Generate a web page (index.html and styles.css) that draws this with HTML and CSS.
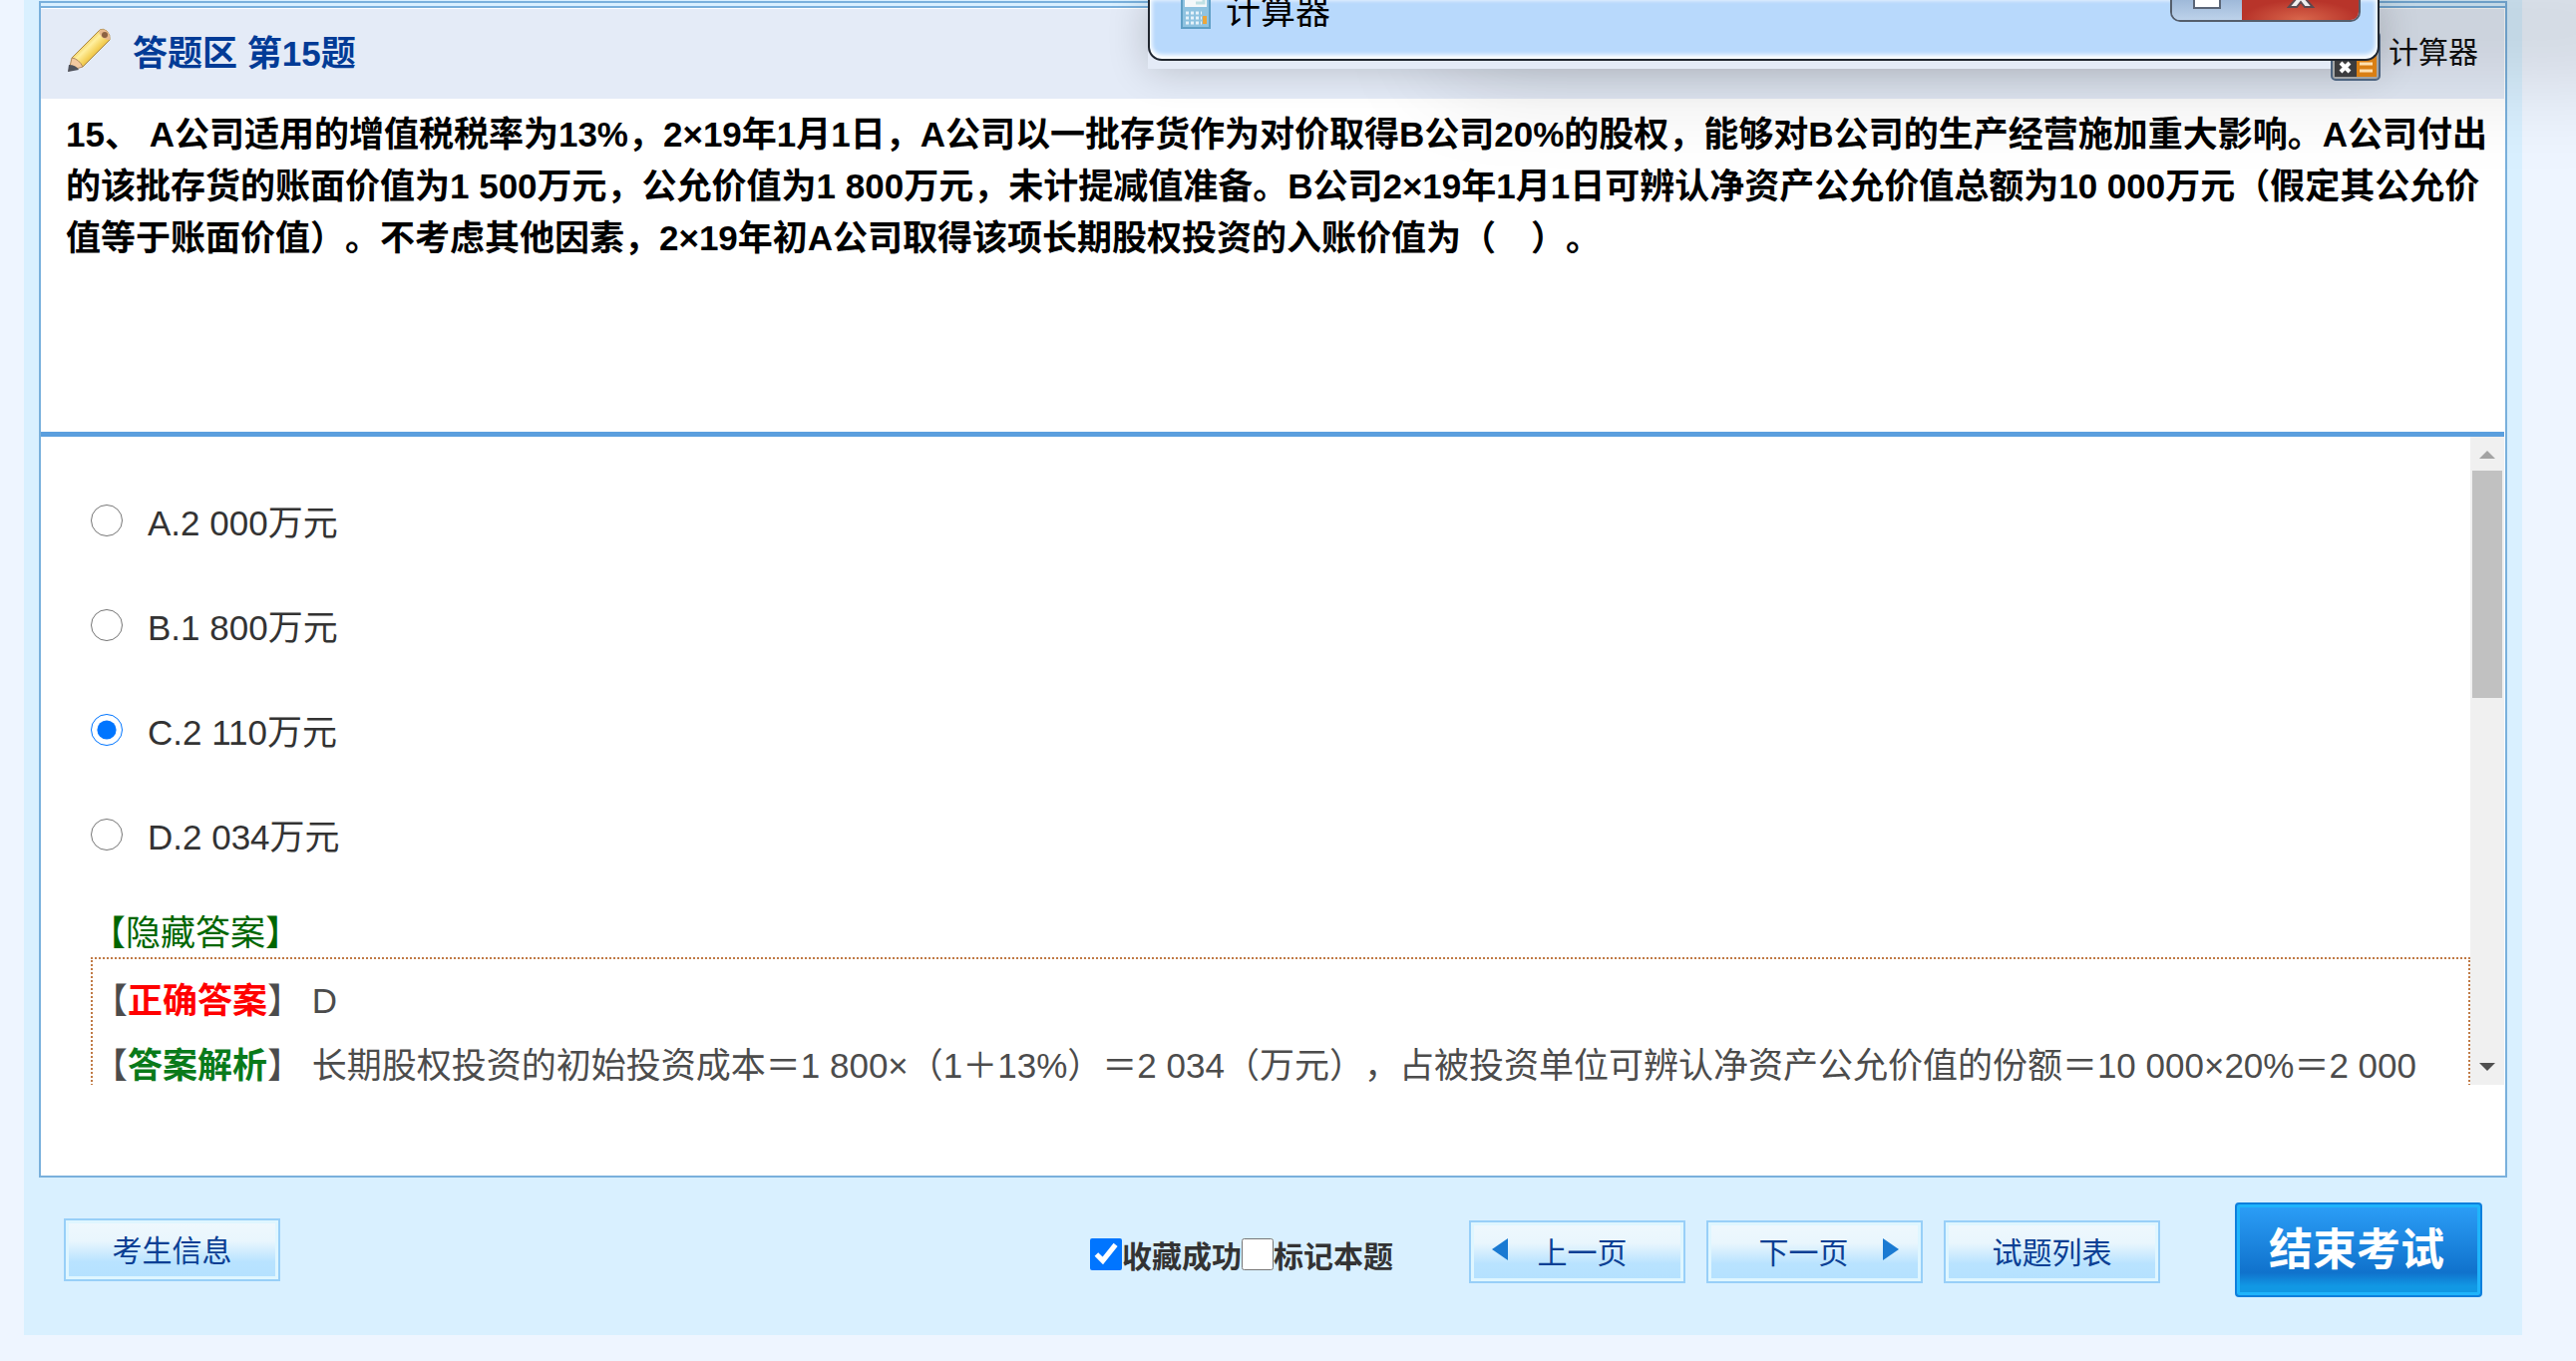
FILE: index.html
```html
<!DOCTYPE html>
<html lang="zh-CN">
<head>
    <meta charset="UTF-8">
    <title>答题区</title>
    <link rel="stylesheet" href="styles.css">
</head>
<body>
    <div class="calc-win">
        <div class="calc-frame">
            <svg class="win-icon" width="30" height="40" viewBox="0 0 30 40">
                <rect width="30" height="40" fill="#5f9fc6"/>
                <rect x="2" width="26" height="38" fill="#8fc3e0"/>
                <rect x="4" y="0" width="22" height="18" fill="#f4f8fa"/>
                <path d="M15 14h8v-8" fill="none" stroke="#bfe0e4" stroke-width="3"/>
                <path d="M5 24h16M5 29h16M5 34h16" stroke="#e6f2fa" stroke-width="3" stroke-dasharray="3 2"/>
                <rect x="22" y="27" width="4" height="8" fill="#eda63a"/>
            </svg>
            <span class="win-title">计算器</span>
            <div class="win-btns">
                <button class="win-max" aria-label="最大化"><svg width="30" height="20" viewBox="0 0 30 20"><path d="M2-4v12h26V-4z" fill="#fff" stroke="#5b6677" stroke-width="2"/></svg></button>
                <button class="win-close" aria-label="关闭"><svg width="30" height="20" viewBox="0 0 30 20"><path d="M3 7l8-9h8l8 9h-8l-4-5-4 5z" fill="#eee" stroke="#5c4a50" stroke-width="2"/></svg></button>
            </div>
        </div>
    </div>
    <div id="container">
        <div class="box">
            <div class="head">
                <svg class="pencil" width="44" height="46" viewBox="0 0 44 46">
                    <defs>
                        <linearGradient id="wood" x1="0" y1="0" x2="1" y2="1">
                            <stop offset="0.3" stop-color="#e9b93c"/>
                            <stop offset="0.45" stop-color="#fff0a0"/>
                            <stop offset="0.6" stop-color="#f3cf55"/>
                            <stop offset="0.8" stop-color="#c08a2a"/>
                        </linearGradient>
                    </defs>
                    <path d="M5 31L33 3q3-2 7 1q4 4 3 9L16 40z" fill="url(#wood)" stroke="#a98746" stroke-width="1"/>
                    <path d="M5 31q7 1 11 9L2 44z" fill="#f3c9a0" stroke="#b08a5c" stroke-width="1"/>
                    <path d="M2 38l-1 7 11-2q-3-5-10-5z" fill="#4f525c"/>
                    <path d="M32 4q3-3 8 0q4 4 3 9q-5 0-8-3t-3-6z" fill="#e8b98e"/>
                    <circle cx="38" cy="8" r="3" fill="#8c6242"/>
                </svg>
                <h1>答题区 第15题</h1>
                <a href="#" class="calc">
                    <svg width="50" height="50" viewBox="0 0 50 50">
                        <rect x="1" y="1" width="48" height="48" rx="4" fill="#a3a5a6" stroke="#4d6480" stroke-width="2"/>
                        <rect x="4" y="4" width="22" height="42" fill="#3c3c3e"/>
                        <rect x="26" y="4" width="20" height="42" fill="#d97f14"/>
                        <path d="M10 32l9 9M19 32l-9 9" stroke="#fff" stroke-width="4"/>
                        <path d="M29 33h13M29 40h13" stroke="#ffe0b0" stroke-width="3"/>
                    </svg>
                    <span>计算器</span>
                </a>
            </div>
            <div class="question">15、 A公司适用的增值税税率为13%，2×19年1月1日，A公司以一批存货作为对价取得B公司20%的股权，能够对B公司的生产经营施加重大影响。A公司付出的该批存货的账面价值为1 500万元，公允价值为1 800万元，未计提减值准备。B公司2×19年1月1日可辨认净资产公允价值总额为10 000万元（假定其公允价值等于账面价值）。不考虑其他因素，2×19年初A公司取得该项长期股权投资的入账价值为（　）。</div>
            <div class="answer">
                <div class="options">
                    <ul>
                        <li><label><input type="radio" name="opt">A.2 000万元</label></li>
                        <li><label><input type="radio" name="opt">B.1 800万元</label></li>
                        <li><label><input type="radio" name="opt" checked>C.2 110万元</label></li>
                        <li><label><input type="radio" name="opt">D.2 034万元</label></li>
                    </ul>
                    <a href="#" class="toggle">【隐藏答案】</a>
                    <div class="analysis">
                        <p>【<b class="right">正确答案</b>】 D</p>
                        <p>【<b class="explain">答案解析</b>】 长期股权投资的初始投资成本＝1 800×（1＋13%）＝2 034（万元），占被投资单位可辨认净资产公允价值的份额＝10 000×20%＝2 000</p>
                    </div>
                </div>
                <div class="scroll">
                    <svg width="34" height="34" viewBox="0 0 34 34"><path d="M9 22l8-8 8 8z" fill="#a3a3a3"/></svg>
                    <div class="track"><div class="thumb"></div></div>
                    <svg width="34" height="34" viewBox="0 0 34 34"><path d="M9 12l8 8 8-8z" fill="#505050"/></svg>
                </div>
            </div>
        </div>
        <div class="foot">
            <button class="btn">考生信息</button>
            <div class="marks">
                <input type="checkbox" id="fav" checked><label for="fav">收藏成功</label><input type="checkbox" id="mark"><label for="mark">标记本题</label>
            </div>
            <div class="pager">
                <button class="btn prev"><svg width="16" height="22" viewBox="0 0 16 22"><path d="M16 0v22L0 11z" fill="#1a7ad2"/></svg>上一页</button>
                <button class="btn next">下一页<svg width="16" height="22" viewBox="0 0 16 22"><path d="M0 0v22l16-11z" fill="#1a7ad2"/></svg></button>
                <button class="btn">试题列表</button>
            </div>
            <button class="finish">结束考试</button>
        </div>
    </div>
</body>
</html>
```

FILE: styles.css
```css
*{
    margin: 0;
    padding: 0;
    box-sizing: border-box;
}
body{
    background: #eef5ff;
    font-family: "Liberation Sans", "Noto Sans CJK SC", sans-serif;
    font-size: 35px;
    color: #333;
    overflow: hidden;
    text-spacing-trim: space-all;
}
li{
    list-style: none;
}
a{
    color: inherit;
    text-decoration: none;
}
button{
    font-family: inherit;
    cursor: pointer;
}
#container{
    margin: 0 54px 26px 24px;
    padding: 1px 15px 0;
    background: #d9f0ff;
}
.box{
    border: 2px solid #79b0dc;
    background: #fff;
}
.box:before{
    content: "";
    display: block;
    height: 3px;
    background: #d9f0ff;
    border-bottom: 2px solid #79b0dc;
}
.head{
    display: flex;
    align-items: center;
    height: 90px;
    margin: 1px 1px 0 0;
    padding: 0 26px 8px;
    background: #e4ebf7;
}
.head h1{
    flex: 1;
    margin-left: 22px;
    font-size: 35px;
    color: #023b96;
}
.calc{
    display: flex;
    align-items: center;
    gap: 8px;
    font-size: 30px;
    color: #111;
}
/* 图标在弹窗阴影之上，在弹窗边框之下 */
.calc svg{
    position: relative;
    z-index: 1;
    margin-top: 12px;
}
.question{
    height: 334px;
    padding: 10px 16px 0 25px;
    line-height: 52px;
    font-weight: bold;
    color: #000;
}
.answer{
    display: flex;
    height: 655px;
    margin: 0 1px 91px 0;
    border-top: 5px solid #5b9fde;
}
.options{
    flex: 1;
    padding: 31px 0 0 50px;
    overflow: hidden;
}
.options li,.options label{
    display: flex;
    align-items: center;
    height: 105px;
}
input[type=radio],input[type=checkbox]{
    width: 32px;
    height: 32px;
}
.options input{
    margin-right: 25px;
}
.toggle{
    display: block;
    height: 71px;
    line-height: 94px;
    color: #060;
}
.analysis{
    height: 400px;
    padding: 9px 0;
    border: 2px dotted #c07a45;
    line-height: 65px;
    color: #4c4c4c;
}
.right{
    color: #f00;
}
.explain{
    color: #0a7a1a;
}
.scroll{
    display: flex;
    flex-direction: column;
    width: 34px;
    background: #f0f0f0;
}
.track{
    flex: 1;
    padding: 0 2px;
}
.thumb{
    height: 228px;
    background: #c1c1c1;
}
.foot{
    display: flex;
    align-items: center;
    height: 158px;
    padding: 0 25px 14px;
}
.btn{
    display: flex;
    align-items: center;
    justify-content: center;
    width: 217px;
    height: 63px;
    padding-bottom: 3px;
    border: 2px solid #98cff8;
    background: linear-gradient(#eff8fd 0%, #e9f6fd 35%, #b9e3ff 70%, #b4e1ff 100%);
    box-shadow: inset 0 0 0 3px #dff6ff;
    font-size: 30px;
    color: #0b3f94;
}
.marks{
    display: flex;
    align-items: center;
    margin: 10px 76px 0 auto;
    font-size: 30px;
    font-weight: bold;
}
.pager{
    display: flex;
    gap: 21px;
    margin: 4px 75px 0 0;
}
.btn svg{
    margin-bottom: 2px;
}
.prev{
    gap: 30px;
    padding-right: 36px;
}
.next{
    gap: 34px;
    padding-left: 28px;
}
.finish{
    width: 248px;
    height: 95px;
    padding: 0 4px 6px 0;
    border: 2px solid #0f7fdc;
    border-radius: 4px;
    background: linear-gradient(#2c9ff8, #1072cc 75%, #1198e4 90%);
    box-shadow: inset 0 0 0 3px #1fb4fb;
    font-size: 44px;
    font-weight: bold;
    color: #fff;
}
/* 计算器弹窗 */
.calc-win{
    position: absolute;
    top: 0;
    right: 197px;
    width: 1235px;
    height: 69px;
    background: #e4ebf7;
    box-shadow: 0 0 40px rgba(0,0,0,.2), 300px -10px 110px rgba(0,0,0,.22);
}
.calc-frame{
    display: flex;
    position: relative;
    z-index: 2;
    height: 61px;
    padding: 0 17px 0 31px;
    border: 2px solid #20262f;
    border-top: none;
    border-radius: 0 0 14px 14px;
    background: #b8d9fc;
    box-shadow: inset 0 -2px 4px 2px #fff;
}
.win-icon{
    margin-top: -11px;
}
.win-title{
    flex: 1;
    margin-left: 15px;
    line-height: 24px;
    color: #000;
}
.win-btns{
    display: flex;
    width: 191px;
    height: 22px;
    border: 2px solid #555e6c;
    border-top: none;
    border-radius: 0 0 10px 10px;
    overflow: hidden;
}
.win-btns button{
    border: none;
    height: 20px;
    line-height: 0;
}
.win-max{
    width: 70px;
    background: linear-gradient(#9fb9d9, #bdd2ea);
}
.win-close{
    flex: 1;
    background: radial-gradient(at 50% 100%, #d9674c, #b8342a 70%);
}
```
